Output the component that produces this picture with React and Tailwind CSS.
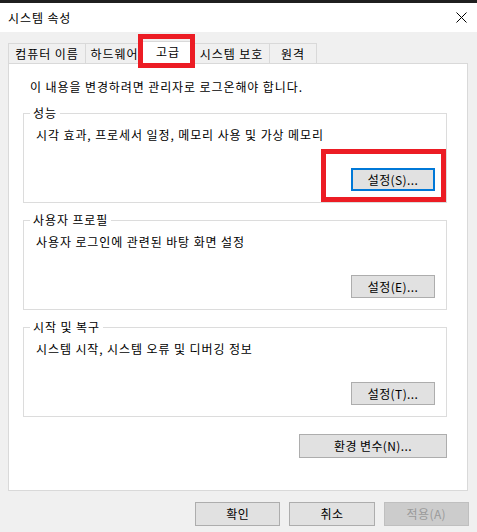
import React from "react";

const font = { fontFamily: '"Noto Sans CJK KR", "Noto Sans", sans-serif' };

function Tab({ label, w, selected, first }) {
  if (selected) {
    return (
      <div
        className={`relative z-10 -ml-[2px] h-[23px] ${w} flex items-center justify-center border-x border-t border-[#d9d9d9] bg-white pb-[2px] text-[12px] leading-[16px] text-black`}
      >
        {label}
      </div>
    );
  }
  return (
    <div
      className={`${first ? "" : "-ml-px"} h-[21px] ${w} flex items-center justify-center border border-[#d9d9d9] bg-[#f0f0f0] text-[12px] leading-[16px] text-black`}
    >
      {label}
    </div>
  );
}

function Button({ children, className = "", focused = false, disabled = false }) {
  return (
    <div
      className={`flex items-center justify-center text-[12px] leading-[16px] tracking-[0.4px] ${
        focused
          ? "border-2 border-[#0078d7] bg-[#e1e1e1] text-black"
          : disabled
          ? "border border-[#bfbfbf] bg-[#cccccc] text-[#9a9a9a]"
          : "border border-[#adadad] bg-[#e1e1e1] text-black"
      } ${className}`}
    >
      {children}
    </div>
  );
}

function Group({ title, text, button, focused, className = "" }) {
  return (
    <div className={`relative h-[90px] border border-[#dcdcdc] flex flex-col ${className}`}>
      <span className="absolute -top-[9px] left-[6px] bg-white px-[3px] text-[12px] leading-[16px] text-black">
        {title}
      </span>
      <div className="pl-[12px] pt-[13px] text-[12px] leading-[16px] text-black">{text}</div>
      <div className="mt-[25px] flex justify-end pr-[11px]">
        <Button focused={focused} className="h-[23px] w-[84px]">
          {button}
        </Button>
      </div>
    </div>
  );
}

export default function App() {
  return (
    <div className="relative flex h-[532px] w-[477px] flex-col bg-[#f0f0f0] tracking-[0.9px]" style={font}>
      <div className="h-[3px] bg-[#1f1f1f]" />
      <div className="flex h-[29px] items-center justify-between bg-white pl-[8px] pr-[10px]">
        <span className="text-[12px] leading-[16px] text-black">시스템 속성</span>
        <svg width="11" height="11" viewBox="0 0 11 11" className="block">
          <path d="M0.5 0.5 L10.5 10.5 M10.5 0.5 L0.5 10.5" stroke="#000" strokeWidth="1" fill="none" />
        </svg>
      </div>
      <div className="flex flex-1 flex-col px-[8px] pt-[11px]">
        <div className="relative z-10 -mb-px flex h-[21px] items-end">
          <Tab label="컴퓨터 이름" w="w-[78px]" first />
          <Tab label="하드웨어" w="w-[59px]" />
          <Tab label="고급" w="w-[52px]" selected />
          <Tab label="시스템 보호" w="w-[77px]" />
          <Tab label="원격" w="w-[48px]" />
        </div>
        <div className="flex h-[428px] w-[460px] flex-col border border-[#d9d9d9] bg-white pl-[14px] pr-[20px]">
          <div className="pl-[7px] pt-[15px] text-[12px] leading-[16px] text-black">
            이 내용을 변경하려면 관리자로 로그온해야 합니다.
          </div>
          <Group
            className="mt-[18px]"
            title="성능"
            text="시각 효과, 프로세서 일정, 메모리 사용 및 가상 메모리"
            button="설정(S)..."
            focused
          />
          <Group
            className="mt-[17px]"
            title="사용자 프로필"
            text="사용자 로그인에 관련된 바탕 화면 설정"
            button="설정(E)..."
          />
          <Group
            className="mt-[17px]"
            title="시작 및 복구"
            text="시스템 시작, 시스템 오류 및 디버깅 정보"
            button="설정(T)..."
          />
          <div className="mt-[17px] flex justify-end">
            <Button className="h-[24px] w-[148px]">환경 변수(N)...</Button>
          </div>
        </div>
        <div className="mt-[11px] flex gap-[9px] pl-[187px]">
          <Button className="h-[24px] w-[86px]">확인</Button>
          <Button className="h-[24px] w-[86px]">취소</Button>
          <Button disabled className="h-[24px] w-[86px]">적용(A)</Button>
        </div>
      </div>
      <div className="pointer-events-none absolute left-[138px] top-[34px] z-20 h-[34px] w-[57px] border-[5px] border-[#ec1c24]" />
      <div className="pointer-events-none absolute left-[321px] top-[149px] z-20 h-[53px] w-[125px] border-[5px] border-[#ec1c24]" />
    </div>
  );
}
